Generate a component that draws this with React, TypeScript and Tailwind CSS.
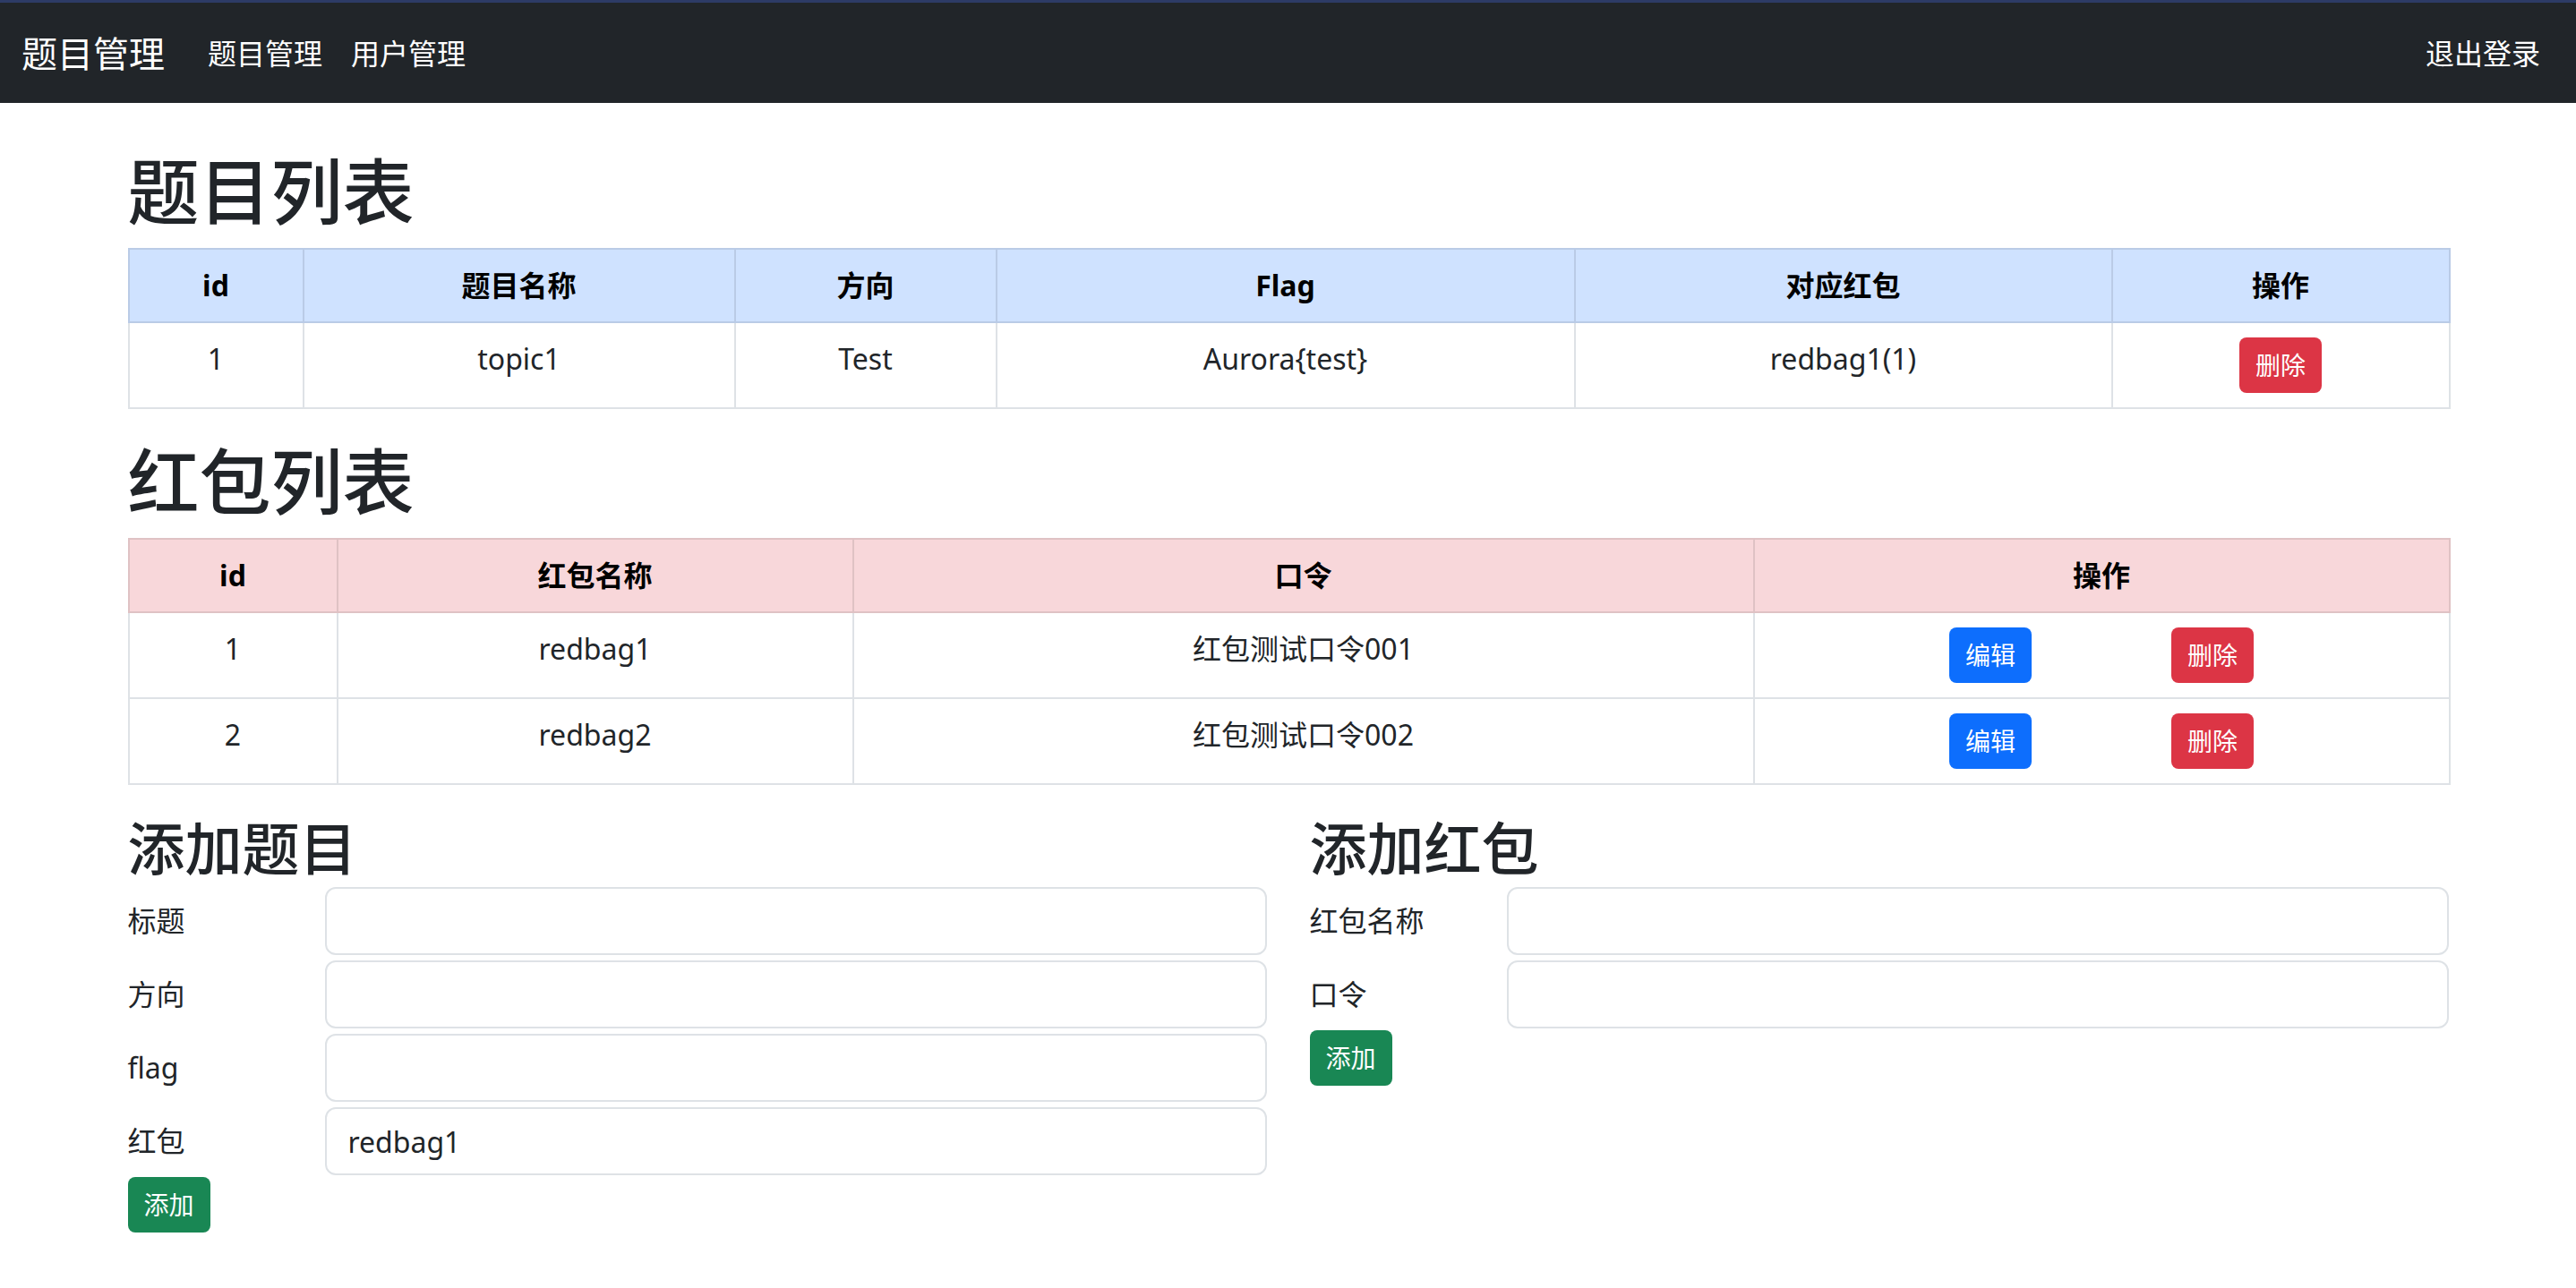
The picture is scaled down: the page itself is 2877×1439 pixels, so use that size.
import React from "react";

const topics = [
  { id: 1, name: "topic1", direction: "Test", flag: "Aurora{test}", redbag: "redbag1(1)" },
];

const redbags = [
  { id: 1, name: "redbag1", code: "红包测试口令001" },
  { id: 2, name: "redbag2", code: "红包测试口令002" },
];

const btn = "inline-flex items-center justify-center rounded-[8px] px-[18px] py-[10px] text-[28px] leading-[42px] text-white";
const td = "border-[2px] border-[#dee2e6] px-[16px] py-[16px] align-top";
const thBlue = "border-[2px] border-[#bacbe6] bg-[#cfe2ff] px-[16px] py-[16px] font-bold text-black";
const thRed = "border-[2px] border-[#dfc2c4] bg-[#f8d7da] px-[16px] py-[16px] font-bold text-black";

function FormRow({ label, value }: { label: string; value?: string }) {
  return (
    <div className="flex items-center">
      <label className="w-[220px] shrink-0">{label}</label>
      <input
        className="h-[76px] flex-1 rounded-[12px] border-[2px] border-[#dee2e6] px-[24px] py-[12px] text-[#212529] outline-none"
        defaultValue={value}
      />
    </div>
  );
}

export default function App() {
  return (
    <div className="min-h-screen bg-white font-['Noto_Sans','Noto_Sans_CJK_SC',sans-serif] text-[32px] leading-[48px] text-[#212529]">
      <div className="h-[3px] bg-[#2d3b66]" />
      <nav className="flex items-center bg-[#212529] px-[24px] pt-[17px] pb-[15px] text-white">
        <a className="mr-[32px] py-[10px] text-[40px] leading-[60px]">题目管理</a>
        <a className="px-[16px] py-[16px]">题目管理</a>
        <a className="px-[16px] py-[16px]">用户管理</a>
        <a className="ml-auto px-[16px] py-[16px]">退出登录</a>
      </nav>

      <main className="mx-auto w-[2640px] px-[24px] pt-[50px]">
        <h1 className="mb-[16px] text-[80px] font-medium leading-[96px]">题目列表</h1>
        <table className="mb-[32px] w-full table-fixed border-collapse text-center">
          <colgroup>
            <col className="w-[195px]" />
            <col className="w-[482px]" />
            <col className="w-[292px]" />
            <col className="w-[646px]" />
            <col className="w-[600px]" />
            <col className="w-[377px]" />
          </colgroup>
          <thead>
            <tr>
              <th className={thBlue}>id</th>
              <th className={thBlue}>题目名称</th>
              <th className={thBlue}>方向</th>
              <th className={thBlue}>Flag</th>
              <th className={thBlue}>对应红包</th>
              <th className={thBlue}>操作</th>
            </tr>
          </thead>
          <tbody>
            {topics.map((t) => (
              <tr key={t.id}>
                <td className={td}>{t.id}</td>
                <td className={td}>{t.name}</td>
                <td className={td}>{t.direction}</td>
                <td className={td}>{t.flag}</td>
                <td className={td}>{t.redbag}</td>
                <td className={td}>
                  <div className="flex justify-center">
                    <button className={`${btn} bg-[#dc3545]`}>删除</button>
                  </div>
                </td>
              </tr>
            ))}
          </tbody>
        </table>

        <h1 className="mb-[16px] text-[80px] font-medium leading-[96px]">红包列表</h1>
        <table className="mb-[32px] w-full table-fixed border-collapse text-center">
          <colgroup>
            <col className="w-[233px]" />
            <col className="w-[576px]" />
            <col className="w-[1006px]" />
            <col className="w-[777px]" />
          </colgroup>
          <thead>
            <tr>
              <th className={thRed}>id</th>
              <th className={thRed}>红包名称</th>
              <th className={thRed}>口令</th>
              <th className={thRed}>操作</th>
            </tr>
          </thead>
          <tbody>
            {redbags.map((r) => (
              <tr key={r.id}>
                <td className={td}>{r.id}</td>
                <td className={td}>{r.name}</td>
                <td className={td}>{r.code}</td>
                <td className={td}>
                  <div className="flex justify-center gap-[156px]">
                    <button className={`${btn} bg-[#0d6efd]`}>编辑</button>
                    <button className={`${btn} bg-[#dc3545]`}>删除</button>
                  </div>
                </td>
              </tr>
            ))}
          </tbody>
        </table>

        <div className="grid grid-cols-2 gap-x-[48px]">
          <div>
            <h2 className="mb-[5px] text-[64px] font-medium leading-[77px]">添加题目</h2>
            <div className="flex flex-col gap-[6px]">
              <FormRow label="标题" />
              <FormRow label="方向" />
              <FormRow label="flag" />
              <FormRow label="红包" value="redbag1" />
            </div>
            <button className={`${btn} mt-[2px] bg-[#198754]`}>添加</button>
          </div>
          <div>
            <h2 className="mb-[5px] text-[64px] font-medium leading-[77px]">添加红包</h2>
            <div className="flex flex-col gap-[6px]">
              <FormRow label="红包名称" />
              <FormRow label="口令" />
            </div>
            <button className={`${btn} mt-[2px] bg-[#198754]`}>添加</button>
          </div>
        </div>
      </main>
    </div>
  );
}
